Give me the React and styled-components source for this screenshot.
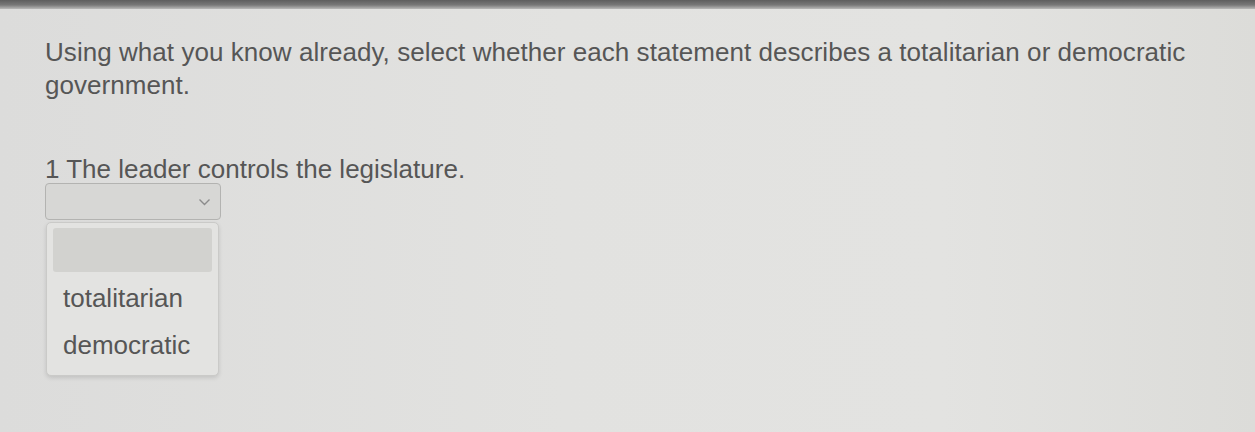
import { useState } from "react";
import styled, { createGlobalStyle } from "styled-components";

const GlobalStyle = createGlobalStyle`
  html, body {
    margin: 0;
    padding: 0;
    background: #dfdfdd;
  }
  body {
    font-family: "Liberation Sans", Arial, sans-serif;
    color: #565656;
  }
`;

const Screen = styled.div`
  width: 1255px;
  height: 432px;
  overflow: hidden;
  background: linear-gradient(90deg, #dcdcdb 0%, #e2e2e0 45%, #e3e3e1 75%, #dcdcd9 100%);
  display: flex;
  flex-direction: column;
`;

const TopEdge = styled.div`
  height: 9px;
  flex: none;
  background: linear-gradient(180deg, #5e5e5e 0%, #787878 55%, #b9b9b8 100%);
`;

const Content = styled.div`
  padding: 27px 45px 0;
`;

const Instructions = styled.p`
  margin: 0;
  font-size: 26px;
  line-height: 33px;
  letter-spacing: 0.05px;
`;

const Question = styled.div`
  margin-top: 53px;
  position: relative;
  width: 176px;
`;

const Prompt = styled.div`
  font-size: 26px;
  line-height: 28px;
  white-space: nowrap;
`;

const SelectBox = styled.button`
  display: flex;
  align-items: center;
  justify-content: flex-end;
  width: 176px;
  height: 37px;
  padding: 0 9px;
  box-sizing: border-box;
  border: 1px solid #b3b3b1;
  border-radius: 4px;
  background: #d7d7d5;
  cursor: pointer;
`;

const Menu = styled.ul`
  position: absolute;
  top: 67px;
  left: 1px;
  width: 173px;
  margin: 0;
  padding: 5px 6px 6px;
  box-sizing: border-box;
  list-style: none;
  background: #e3e3e1;
  border: 1px solid #cacac8;
  border-radius: 5px;
  box-shadow: 0 2px 4px rgba(0, 0, 0, 0.12);
`;

const Option = styled.li`
  height: ${(p) => (p.$blank ? "44px" : "47px")};
  display: flex;
  align-items: center;
  padding: 0 10px;
  font-size: 26px;
  border-radius: 3px;
  background: ${(p) => (p.$active ? "#d2d2cf" : "transparent")};
  margin-bottom: ${(p) => (p.$blank ? "3px" : "0")};
`;

const Chevron = () => (
  <svg width="13" height="8" viewBox="0 0 13 8" fill="none">
    <path d="M1.5 1.5 L6.5 6.5 L11.5 1.5" stroke="#8c8c8c" strokeWidth="1.4" />
  </svg>
);

const options = ["", "totalitarian", "democratic"];

export default function App() {
  const [open] = useState(true);
  return (
    <Screen>
      <GlobalStyle />
      <TopEdge />
      <Content>
        <Instructions>
          Using what you know already, select whether each statement describes a
          totalitarian or democratic
          <br />
          government.
        </Instructions>
        <Question>
          <Prompt>1 The leader controls the legislature.</Prompt>
          <SelectBox>
            <Chevron />
          </SelectBox>
          {open && (
            <Menu>
              {options.map((o, i) => (
                <Option key={i} $blank={o === ""} $active={i === 0}>
                  {o}
                </Option>
              ))}
            </Menu>
          )}
        </Question>
      </Content>
    </Screen>
  );
}
